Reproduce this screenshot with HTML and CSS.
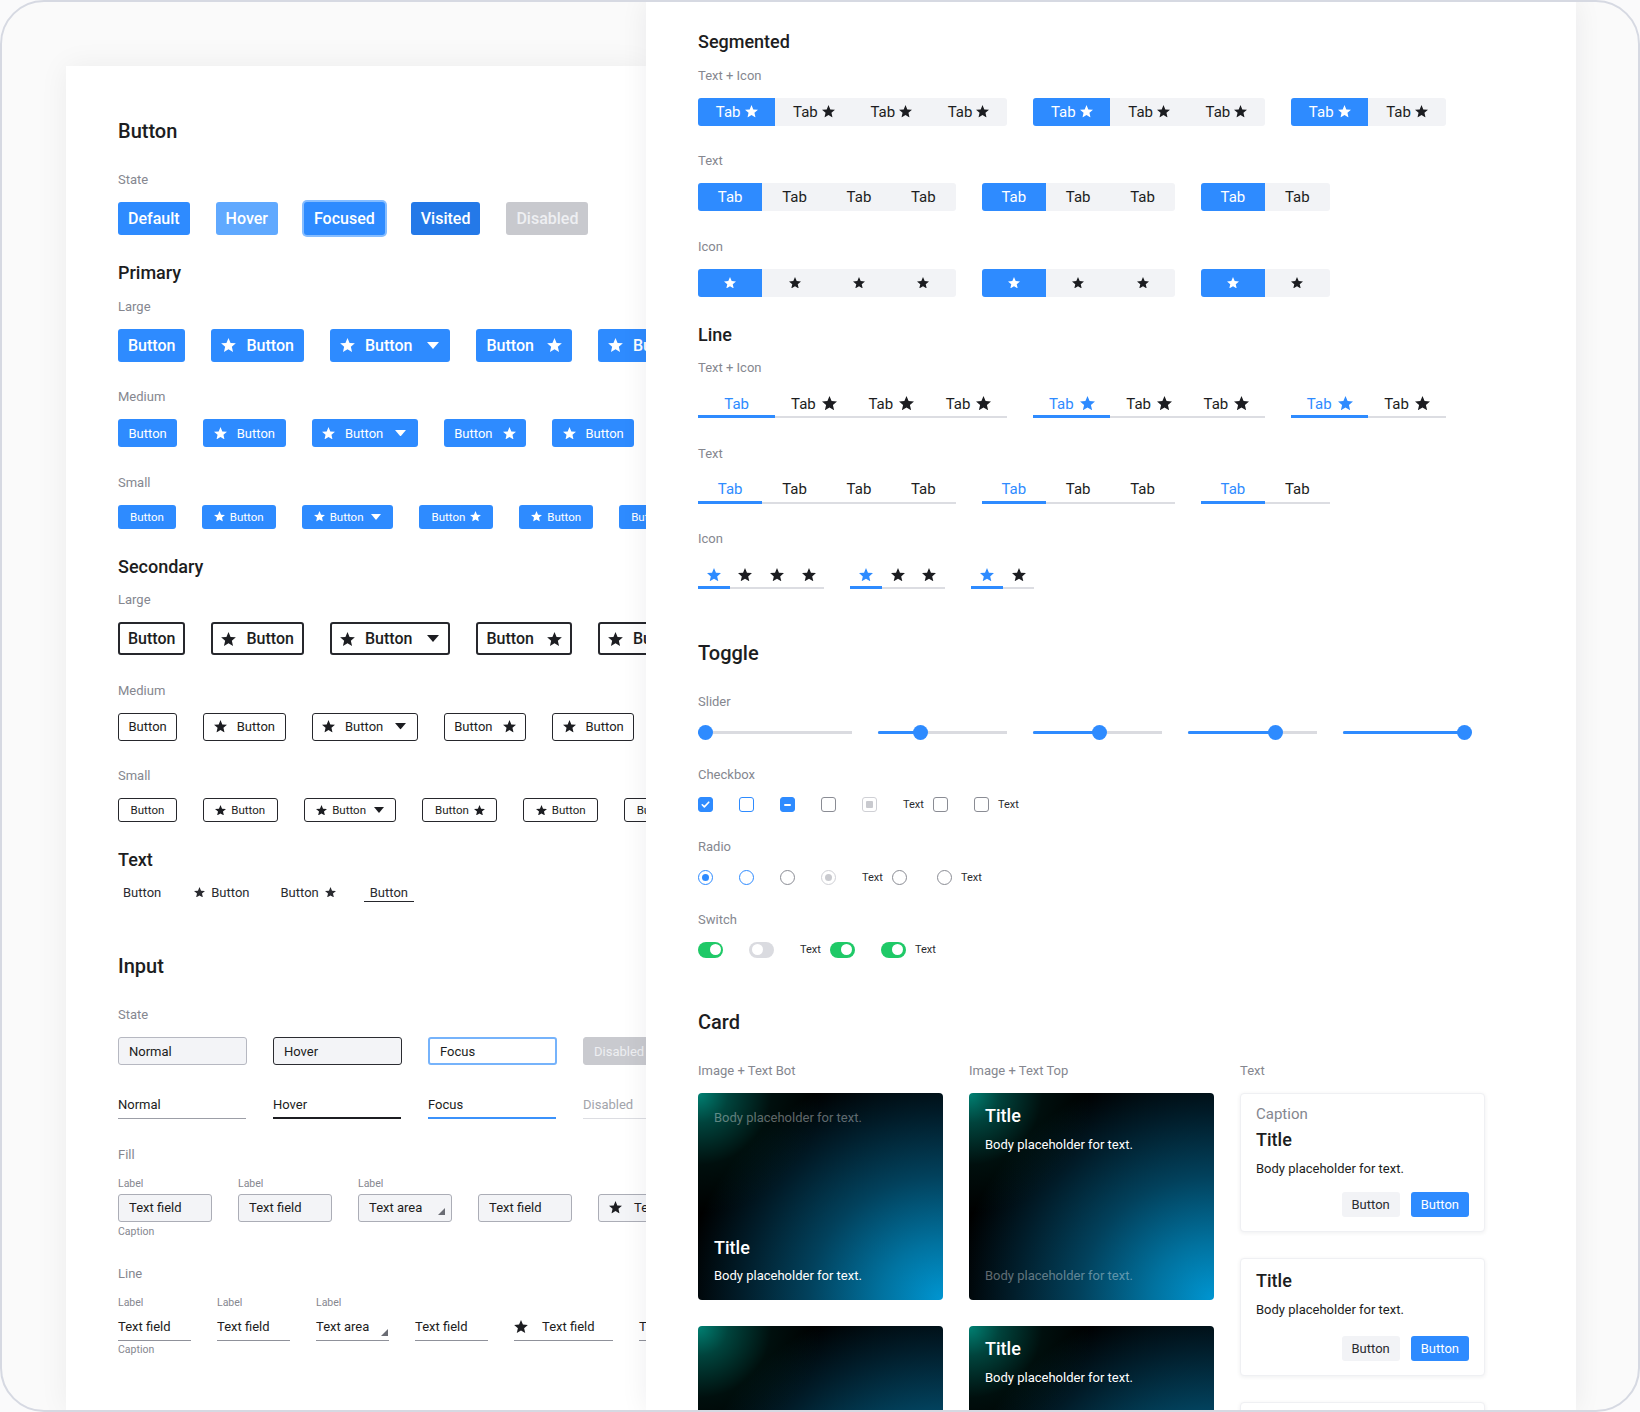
FILE: index.html
```html
<!DOCTYPE html>
<html lang="en">
<head>
<meta charset="utf-8">
<title>UI Kit</title>
<link rel="stylesheet" href="styles.css">
</head>
<body>
<svg class="sprite" aria-hidden="true">
  <symbol id="star" viewBox="2 2 20 19"><path d="M12 2l2.81 6.63L22 9.24l-5.46 4.73L18.18 21 12 17.27 5.82 21l1.64-7.03L2 9.24l7.19-.61z"/></symbol>
  <symbol id="caret" viewBox="0 0 12 7"><path d="M0 0h12L6 7z"/></symbol>
  <symbol id="grip" viewBox="0 0 7 7"><path d="M7 0V7H0z"/></symbol>
</svg>
<div class="frame">
  <section class="panel left">
    <h2 class="h2">Button</h2>
    <div class="lbl">State</div>
    <div class="row">
      <span class="btn st">Default</span>
      <span class="btn st hover">Hover</span>
      <span class="btn st focused">Focused</span>
      <span class="btn st visited">Visited</span>
      <span class="btn st disabled">Disabled</span>
    </div>

    <h3 class="h3">Primary</h3>
    <div class="lbl">Large</div>
    <div class="row">
      <span class="btn p lg">Button</span>
      <span class="btn p lg"><svg class="ic"><use href="#star"/></svg>Button</span>
      <span class="btn p lg"><svg class="ic"><use href="#star"/></svg>Button<svg class="cr"><use href="#caret"/></svg></span>
      <span class="btn p lg">Button<svg class="ic tr"><use href="#star"/></svg></span>
      <span class="btn p lg"><svg class="ic"><use href="#star"/></svg>Button</span>
    </div>
    <div class="lbl">Medium</div>
    <div class="row">
      <span class="btn p md">Button</span>
      <span class="btn p md"><svg class="ic"><use href="#star"/></svg>Button</span>
      <span class="btn p md"><svg class="ic"><use href="#star"/></svg>Button<svg class="cr"><use href="#caret"/></svg></span>
      <span class="btn p md">Button<svg class="ic"><use href="#star"/></svg></span>
      <span class="btn p md"><svg class="ic"><use href="#star"/></svg>Button</span>
    </div>
    <div class="lbl">Small</div>
    <div class="row">
      <span class="btn p sm">Button</span>
      <span class="btn p sm"><svg class="ic"><use href="#star"/></svg>Button</span>
      <span class="btn p sm"><svg class="ic"><use href="#star"/></svg>Button<svg class="cr"><use href="#caret"/></svg></span>
      <span class="btn p sm">Button<svg class="ic"><use href="#star"/></svg></span>
      <span class="btn p sm"><svg class="ic"><use href="#star"/></svg>Button</span>
      <span class="btn p sm">Button</span>
    </div>

    <h3 class="h3">Secondary</h3>
    <div class="lbl">Large</div>
    <div class="row">
      <span class="btn s lg">Button</span>
      <span class="btn s lg"><svg class="ic"><use href="#star"/></svg>Button</span>
      <span class="btn s lg"><svg class="ic"><use href="#star"/></svg>Button<svg class="cr"><use href="#caret"/></svg></span>
      <span class="btn s lg">Button<svg class="ic tr"><use href="#star"/></svg></span>
      <span class="btn s lg"><svg class="ic"><use href="#star"/></svg>Button</span>
    </div>
    <div class="lbl">Medium</div>
    <div class="row">
      <span class="btn s md">Button</span>
      <span class="btn s md"><svg class="ic"><use href="#star"/></svg>Button</span>
      <span class="btn s md"><svg class="ic"><use href="#star"/></svg>Button<svg class="cr"><use href="#caret"/></svg></span>
      <span class="btn s md">Button<svg class="ic"><use href="#star"/></svg></span>
      <span class="btn s md"><svg class="ic"><use href="#star"/></svg>Button</span>
    </div>
    <div class="lbl">Small</div>
    <div class="row">
      <span class="btn s sm">Button</span>
      <span class="btn s sm"><svg class="ic"><use href="#star"/></svg>Button</span>
      <span class="btn s sm"><svg class="ic"><use href="#star"/></svg>Button<svg class="cr"><use href="#caret"/></svg></span>
      <span class="btn s sm">Button<svg class="ic"><use href="#star"/></svg></span>
      <span class="btn s sm"><svg class="ic"><use href="#star"/></svg>Button</span>
      <span class="btn s sm">Button</span>
    </div>

    <h3 class="h3">Text</h3>
    <div class="row trow-btn">
      <span class="tbtn">Button</span>
      <span class="tbtn"><svg class="ic"><use href="#star"/></svg>Button</span>
      <span class="tbtn">Button<svg class="ic"><use href="#star"/></svg></span>
      <span class="tbtn ul">Button</span>
    </div>

    <h2 class="h2">Input</h2>
    <div class="lbl">State</div>
    <div class="row">
      <span class="inp">Normal</span>
      <span class="inp hover">Hover</span>
      <span class="inp focus">Focus</span>
      <span class="inp disabled">Disabled</span>
    </div>
    <div class="row">
      <span class="linp">Normal</span>
      <span class="linp hover">Hover</span>
      <span class="linp focus">Focus</span>
      <span class="linp disabled">Disabled</span>
    </div>
    <div class="lbl">Fill</div>
    <div class="row">
      <div class="field">
        <div class="flabel">Label</div>
        <div class="fbox">Text field</div>
        <div class="fcap">Caption</div>
      </div>
      <div class="field">
        <div class="flabel">Label</div>
        <div class="fbox">Text field</div>
      </div>
      <div class="field">
        <div class="flabel">Label</div>
        <div class="fbox">Text area<svg class="grip"><use href="#grip"/></svg></div>
      </div>
      <div class="field">
        <div class="flabel"></div>
        <div class="fbox">Text field</div>
      </div>
      <div class="field">
        <div class="flabel"></div>
        <div class="fbox icon"><svg class="ic"><use href="#star"/></svg>Text field</div>
      </div>
    </div>
    <div class="lbl">Line</div>
    <div class="row">
      <div class="field">
        <div class="flabel">Label</div>
        <div class="lbox">Text field</div>
        <div class="lcap">Caption</div>
      </div>
      <div class="field">
        <div class="flabel">Label</div>
        <div class="lbox">Text field</div>
      </div>
      <div class="field">
        <div class="flabel">Label</div>
        <div class="lbox">Text area<svg class="grip"><use href="#grip"/></svg></div>
      </div>
      <div class="field">
        <div class="flabel"></div>
        <div class="lbox">Text field</div>
      </div>
      <div class="field">
        <div class="flabel"></div>
        <div class="lbox wide"><svg class="ic"><use href="#star"/></svg>Text field</div>
      </div>
      <div class="field">
        <div class="flabel"></div>
        <div class="lbox">Text field</div>
      </div>
    </div>
  </section>

  <section class="panel right">
    <h3 class="h3">Segmented</h3>
    <div class="lbl">Text + Icon</div>
    <div class="row">
      <div class="seg w77">
        <span class="tab on">Tab<svg class="ic"><use href="#star"/></svg></span>
        <span class="tab">Tab<svg class="ic"><use href="#star"/></svg></span>
        <span class="tab">Tab<svg class="ic"><use href="#star"/></svg></span>
        <span class="tab">Tab<svg class="ic"><use href="#star"/></svg></span>
      </div>
      <div class="seg w77">
        <span class="tab on">Tab<svg class="ic"><use href="#star"/></svg></span>
        <span class="tab">Tab<svg class="ic"><use href="#star"/></svg></span>
        <span class="tab">Tab<svg class="ic"><use href="#star"/></svg></span>
      </div>
      <div class="seg w77">
        <span class="tab on">Tab<svg class="ic"><use href="#star"/></svg></span>
        <span class="tab">Tab<svg class="ic"><use href="#star"/></svg></span>
      </div>
    </div>
    <div class="lbl">Text</div>
    <div class="row">
      <div class="seg w64">
        <span class="tab on">Tab</span><span class="tab">Tab</span><span class="tab">Tab</span><span class="tab">Tab</span>
      </div>
      <div class="seg w64">
        <span class="tab on">Tab</span><span class="tab">Tab</span><span class="tab">Tab</span>
      </div>
      <div class="seg w64">
        <span class="tab on">Tab</span><span class="tab">Tab</span>
      </div>
    </div>
    <div class="lbl">Icon</div>
    <div class="row">
      <div class="seg w64 icons">
        <span class="tab on"><svg class="ic"><use href="#star"/></svg></span>
        <span class="tab"><svg class="ic"><use href="#star"/></svg></span>
        <span class="tab"><svg class="ic"><use href="#star"/></svg></span>
        <span class="tab"><svg class="ic"><use href="#star"/></svg></span>
      </div>
      <div class="seg w64 icons">
        <span class="tab on"><svg class="ic"><use href="#star"/></svg></span>
        <span class="tab"><svg class="ic"><use href="#star"/></svg></span>
        <span class="tab"><svg class="ic"><use href="#star"/></svg></span>
      </div>
      <div class="seg w64 icons">
        <span class="tab on"><svg class="ic"><use href="#star"/></svg></span>
        <span class="tab"><svg class="ic"><use href="#star"/></svg></span>
      </div>
    </div>

    <h3 class="h3">Line</h3>
    <div class="lbl">Text + Icon</div>
    <div class="row">
      <div class="ltabs w77">
        <span class="ltab on">Tab</span>
        <span class="ltab">Tab<svg class="ic"><use href="#star"/></svg></span>
        <span class="ltab">Tab<svg class="ic"><use href="#star"/></svg></span>
        <span class="ltab">Tab<svg class="ic"><use href="#star"/></svg></span>
      </div>
      <div class="ltabs w77">
        <span class="ltab on">Tab<svg class="ic"><use href="#star"/></svg></span>
        <span class="ltab">Tab<svg class="ic"><use href="#star"/></svg></span>
        <span class="ltab">Tab<svg class="ic"><use href="#star"/></svg></span>
      </div>
      <div class="ltabs w77">
        <span class="ltab on">Tab<svg class="ic"><use href="#star"/></svg></span>
        <span class="ltab">Tab<svg class="ic"><use href="#star"/></svg></span>
      </div>
    </div>
    <div class="lbl">Text</div>
    <div class="row">
      <div class="ltabs w64">
        <span class="ltab on">Tab</span><span class="ltab">Tab</span><span class="ltab">Tab</span><span class="ltab">Tab</span>
      </div>
      <div class="ltabs w64">
        <span class="ltab on">Tab</span><span class="ltab">Tab</span><span class="ltab">Tab</span>
      </div>
      <div class="ltabs w64">
        <span class="ltab on">Tab</span><span class="ltab">Tab</span>
      </div>
    </div>
    <div class="lbl">Icon</div>
    <div class="row">
      <div class="ltabs w32 icons">
        <span class="ltab on"><svg class="ic"><use href="#star"/></svg></span>
        <span class="ltab"><svg class="ic"><use href="#star"/></svg></span>
        <span class="ltab"><svg class="ic"><use href="#star"/></svg></span>
        <span class="ltab"><svg class="ic"><use href="#star"/></svg></span>
      </div>
      <div class="ltabs w32 icons">
        <span class="ltab on"><svg class="ic"><use href="#star"/></svg></span>
        <span class="ltab"><svg class="ic"><use href="#star"/></svg></span>
        <span class="ltab"><svg class="ic"><use href="#star"/></svg></span>
      </div>
      <div class="ltabs w32 icons">
        <span class="ltab on"><svg class="ic"><use href="#star"/></svg></span>
        <span class="ltab"><svg class="ic"><use href="#star"/></svg></span>
      </div>
    </div>

    <h2 class="h2">Toggle</h2>
    <div class="lbl">Slider</div>
    <div class="row trow">
      <div class="slider long" style="--p:0"><span class="knob"></span></div>
      <div class="slider" style="--p:0.305"><span class="knob"></span></div>
      <div class="slider" style="--p:0.518"><span class="knob"></span></div>
      <div class="slider" style="--p:0.704"><span class="knob"></span></div>
      <div class="slider" style="--p:1"><span class="knob"></span></div>
    </div>
    <div class="lbl">Checkbox</div>
    <div class="row trow">
      <span class="cb checked"><svg viewBox="0 0 16 16"><path d="M4 8.3l2.6 2.6L12 5.2"/></svg></span>
      <span class="cb active"></span>
      <span class="cb mixed"><i></i></span>
      <span class="cb"></span>
      <span class="cb dis"><i></i></span>
      <span class="pair">Text<span class="cb"></span></span>
      <span class="pair"><span class="cb"></span>Text</span>
    </div>
    <div class="lbl">Radio</div>
    <div class="row trow">
      <span class="rd sel"><i></i></span>
      <span class="rd active"></span>
      <span class="rd"></span>
      <span class="rd dis"><i></i></span>
      <span class="pair">Text<span class="rd"></span></span>
      <span class="pair last"><span class="rd"></span>Text</span>
    </div>
    <div class="lbl">Switch</div>
    <div class="row trow">
      <span class="sw on"><i></i></span>
      <span class="sw"><i></i></span>
      <span class="pair">Text<span class="sw on"><i></i></span></span>
      <span class="pair"><span class="sw on"><i></i></span>Text</span>
    </div>

    <h2 class="h2">Card</h2>
    <div class="cards">
      <div class="ccol">
        <div class="lbl">Image + Text Bot</div>
        <div class="stack">
          <div class="icard bot">
            <p class="muted">Body placeholder for text.</p>
            <div>
              <div class="ctitle">Title</div>
              <p class="cbody">Body placeholder for text.</p>
            </div>
          </div>
          <div class="icard"></div>
        </div>
      </div>
      <div class="ccol">
        <div class="lbl">Image + Text Top</div>
        <div class="stack">
          <div class="icard">
            <div>
              <div class="ctitle">Title</div>
              <p class="cbody">Body placeholder for text.</p>
            </div>
            <p class="muted">Body placeholder for text.</p>
          </div>
          <div class="icard">
            <div>
              <div class="ctitle">Title</div>
              <p class="cbody">Body placeholder for text.</p>
            </div>
          </div>
        </div>
      </div>
      <div class="ccol">
        <div class="lbl">Text</div>
        <div class="stack">
          <div class="tcard">
            <div class="ccap">Caption</div>
            <div class="ctitle">Title</div>
            <p class="cbody">Body placeholder for text.</p>
            <div class="cact"><span class="cbtn">Button</span><span class="cbtn blue">Button</span></div>
          </div>
          <div class="tcard plain">
            <div class="ctitle">Title</div>
            <p class="cbody">Body placeholder for text.</p>
            <div class="cact"><span class="cbtn">Button</span><span class="cbtn blue">Button</span></div>
          </div>
          <div class="tcard plain">
            <div class="ctitle">Title</div>
            <p class="cbody">Body placeholder for text.</p>
          </div>
        </div>
      </div>
    </div>
  </section>
</div>
</body>
</html>
```
FILE: styles.css
```css
html, body {
  margin: 0;
  padding: 0;
  background: #fafafb;
}
body {
  font-family: Roboto, "Liberation Sans", Arial, sans-serif;
  color: #1c1d21;
  width: 1640px;
  height: 1412px;
  overflow: hidden;
}
.sprite {
  display: block;
  width: 0;
  height: 0;
  overflow: hidden;
}
.frame {
  box-sizing: border-box;
  width: 1640px;
  height: 1412px;
  border: 2px solid #d6d9e2;
  border-radius: 44px;
  overflow: hidden;
  background: #fafafa;
  display: flex;
  align-items: stretch;
}
.panel {
  background: #fff;
  box-sizing: border-box;
  flex-shrink: 0;
  overflow: hidden;
}
.left {
  width: 580px;
  margin: 64px 0 0 64px;
  padding: 53px 0 0 52px;
  box-shadow: 0 0 28px rgba(20, 24, 40, 0.06);
}
.right {
  width: 930px;
  padding: 29px 0 0 52px;
  box-shadow: 0 0 26px rgba(20, 24, 40, 0.07);
  position: relative;
  z-index: 1;
}

.h2 {
  font-size: 20px;
  line-height: 24px;
  font-weight: 500;
  margin: 0;
}
.h3 {
  font-size: 18px;
  line-height: 22px;
  font-weight: 500;
  margin: 0;
}
.lbl {
  font-size: 13px;
  line-height: 16px;
  color: #85878f;
  margin: 0 0 14px;
  white-space: nowrap;
}
.h2 + .lbl { margin-top: 29px; }
.h3 + .lbl { margin-top: 14.5px; }
.row + .lbl { margin-top: 27.5px; }
.row + .h3 { margin-top: 27px; }
.row + .h2 { margin-top: 52px; }
.h3 + .row { margin-top: 11px; }
.row + .row { margin-top: 26px; }
.trow + .lbl { margin-top: 26.5px; }

.row {
  display: flex;
  align-items: flex-start;
  gap: 26px;
  white-space: nowrap;
}

/* Buttons */
.btn {
  display: inline-flex;
  align-items: center;
  justify-content: center;
  box-sizing: border-box;
  border-radius: 3px;
  flex-shrink: 0;
  white-space: nowrap;
}
.ic {
  fill: currentColor;
  flex-shrink: 0;
}
.cr {
  fill: currentColor;
  flex-shrink: 0;
}
.st {
  height: 33px;
  padding: 0 10px;
  font-size: 16px;
  font-weight: 500;
  background: #2e8bff;
  color: #fff;
}
.st.hover { background: #60a9ff; }
.st.focused { box-shadow: 0 0 0 2px #86bdff; }
.st.visited { background: #2479e8; }
.st.disabled { background: #c8c9ce; color: #eeeff2; }

.lg {
  height: 33px;
  padding: 0 10px;
  gap: 10px;
  font-size: 16px;
  font-weight: 500;
}
.lg .ic { width: 15px; height: 14px; }
.lg .ic.tr { margin-left: 3px; }
.lg .cr { width: 12px; height: 7px; margin-left: 5px; margin-right: 1px; }
.md {
  height: 28px;
  padding: 0 10.5px;
  gap: 10px;
  font-size: 13px;
}
.md .ic { width: 13px; height: 12.5px; }
.md .cr { width: 11px; height: 6.5px; margin-left: 2px; margin-right: 1px; }
.sm {
  height: 24px;
  padding: 0 12px;
  gap: 5px;
  font-size: 11.5px;
}
.sm .ic { width: 11px; height: 10.5px; }
.sm .cr { width: 10px; height: 6px; margin-left: 3px; }
.p { background: #2e8bff; color: #fff; }
.s { background: #fff; color: #1c1d21; border: 1.5px solid #26272c; }
.s.lg { border-width: 2px; padding: 0 8px; }
.s.md { padding: 0 9.5px; }
.s.sm { padding: 0 11.5px; }

.tbtn {
  display: inline-flex;
  align-items: center;
  gap: 6px;
  height: 20px;
  box-sizing: border-box;
  padding: 0 5px;
  font-size: 13px;
  color: #2a2b30;
}
.tbtn .ic { width: 11px; height: 10.5px; }
.tbtn.ul { border-bottom: 1.5px solid #26272c; padding: 1px 6px 0; }
.trow-btn { gap: 23px; }
.trow-btn .tbtn:nth-child(3) { margin-left: -2px; }

/* Inputs */
.inp {
  box-sizing: border-box;
  width: 129px;
  height: 28px;
  display: flex;
  align-items: center;
  padding: 0 10px;
  font-size: 13px;
  background: #f3f4f7;
  border: 1px solid #b6b8c1;
  border-radius: 3px;
  flex-shrink: 0;
}
.inp.hover { border: 1.5px solid #2b2c31; }
.inp.focus { border: 2px solid #76b3fb; background: #fff; }
.inp.disabled { background: #c9cacf; border-color: #c9cacf; color: #eeeff2; }
.linp {
  box-sizing: border-box;
  width: 128px;
  height: 28px;
  display: flex;
  align-items: center;
  font-size: 13px;
  border-bottom: 1.5px solid #9c9ea7;
  flex-shrink: 0;
  margin-right: 1px;
}
.linp.hover { border-bottom: 2px solid #1c1d21; }
.linp.focus { border-bottom: 2px solid #3b92fb; }
.linp.disabled { border-bottom-color: #dcdde2; color: #a2a4ab; }

.field {
  display: flex;
  flex-direction: column;
  flex-shrink: 0;
}
.flabel {
  height: 14px;
  line-height: 14px;
  font-size: 10.5px;
  color: #85878f;
  margin-bottom: 3px;
}
.fbox {
  box-sizing: border-box;
  width: 94px;
  height: 28px;
  display: flex;
  align-items: center;
  gap: 12px;
  padding: 0 10px;
  font-size: 13px;
  background: #f3f4f7;
  border: 1px solid #abadb6;
  border-radius: 3px;
}
.fbox .ic { width: 13px; height: 12.5px; color: #1c1d21; }
.fcap, .lcap {
  font-size: 10.5px;
  line-height: 14px;
  color: #85878f;
  margin-top: 3px;
}
.lcap { margin-top: 2px; }
.grip {
  width: 7px;
  height: 7px;
  fill: #6a6c74;
  margin-left: auto;
  align-self: flex-end;
  margin-bottom: 6px;
  flex-shrink: 0;
}
.fbox .grip { margin-right: -4px; }
.lbox {
  box-sizing: border-box;
  width: 73px;
  height: 28px;
  display: flex;
  align-items: center;
  font-size: 13px;
  border-bottom: 1.5px solid #8f919a;
}
.lbox.wide { width: 99px; gap: 14px; }
.lbox .ic { width: 14px; height: 13px; }
.lbox .grip { width: 7px; height: 7px; margin-right: 1px; margin-bottom: 4px; }

/* Segmented */
.seg {
  display: flex;
  background: #f2f3f6;
  border-radius: 3px;
  overflow: hidden;
  flex-shrink: 0;
}
.tab {
  height: 28px;
  display: flex;
  align-items: center;
  justify-content: center;
  gap: 4px;
  font-size: 15px;
  color: #1c1d21;
  flex-shrink: 0;
}
.seg .ic { width: 13px; height: 12.5px; }
.seg.icons .ic { width: 12px; height: 11.5px; }
.w77 .tab, .w77 .ltab { width: 77.3px; }
.w64 .tab, .w64 .ltab { width: 64.4px; }
.w32 .ltab { width: 31.6px; }
.tab.on { background: #2e8bff; color: #fff; }

.ltabs {
  display: flex;
  flex-shrink: 0;
}
.ltab {
  box-sizing: border-box;
  height: 28px;
  display: flex;
  align-items: center;
  justify-content: center;
  gap: 6px;
  padding-top: 1px;
  font-size: 15px;
  color: #1c1d21;
  border-bottom: 2px solid #dcdde2;
  flex-shrink: 0;
}
.ltab .ic { width: 15px; height: 14.3px; }
.ltabs.icons .ic { width: 14px; height: 13.3px; }
.ltab.on { color: #2e8bff; border-bottom: 3px solid #2e8bff; padding-top: 2px; }

/* Toggle */
.trow { align-items: center; height: 16px; }
.slider {
  position: relative;
  width: 129px;
  height: 16px;
  flex-shrink: 0;
  background: linear-gradient(#dadbe0, #dadbe0) no-repeat 0 50% / 100% 3px;
  border-radius: 2px;
}
.slider.long { width: 154px; }
.slider::before {
  content: "";
  display: block;
  height: 3px;
  margin-top: 6.5px;
  width: calc((100% - 15px) * var(--p) + 7.5px);
  background: #2e8bff;
  border-radius: 2px;
}
.knob {
  position: absolute;
  top: 0.5px;
  left: calc((100% - 15px) * var(--p));
  width: 15px;
  height: 15px;
  border-radius: 50%;
  background: #2e8bff;
}
.cb {
  box-sizing: border-box;
  width: 15px;
  height: 15px;
  border: 1.5px solid #8a8c94;
  border-radius: 3px;
  display: inline-flex;
  align-items: center;
  justify-content: center;
  flex-shrink: 0;
  background: #fff;
}
.cb.checked { background: #2e8bff; border-color: #2e8bff; }
.cb.checked svg { width: 13px; height: 13px; }
.cb.checked path { fill: none; stroke: #fff; stroke-width: 2; stroke-linecap: round; stroke-linejoin: round; }
.cb.active { border-color: #2e8bff; }
.cb.mixed { background: #2e8bff; border-color: #2e8bff; }
.cb.mixed i { width: 7px; height: 2px; background: #fff; border-radius: 1px; }
.cb.dis { border-color: #cfd0d5; }
.cb.dis i { width: 7px; height: 7px; background: #c9cacf; border-radius: 1px; }
.pair {
  display: inline-flex;
  align-items: center;
  gap: 9px;
  font-size: 11px;
  color: #2a2b30;
  flex-shrink: 0;
}
.pair.last { margin-left: 4px; }
.rd {
  box-sizing: border-box;
  width: 15px;
  height: 15px;
  border: 1.5px solid #8a8c94;
  border-radius: 50%;
  display: inline-flex;
  align-items: center;
  justify-content: center;
  flex-shrink: 0;
}
.rd.sel, .rd.active { border-color: #2e8bff; }
.rd.sel i { width: 7px; height: 7px; border-radius: 50%; background: #2e8bff; }
.rd.dis { border-color: #cfd0d5; }
.rd.dis i { width: 7px; height: 7px; border-radius: 50%; background: #c9cacf; }
.sw {
  box-sizing: border-box;
  width: 25px;
  height: 16px;
  border-radius: 8px;
  background: #dadbe0;
  display: inline-flex;
  align-items: center;
  padding: 0 2.5px;
  flex-shrink: 0;
}
.sw i {
  width: 11px;
  height: 11px;
  border-radius: 50%;
  background: #fff;
}
.sw.on { background: #1fc967; justify-content: flex-end; }

/* Cards */
.cards {
  display: flex;
  gap: 26px;
  margin-top: 29px;
}
.ccol {
  width: 245px;
  flex-shrink: 0;
}
.stack {
  display: flex;
  flex-direction: column;
  gap: 26px;
}
.icard {
  box-sizing: border-box;
  height: 207px;
  border-radius: 4px;
  padding: 12px 16px 16px;
  display: flex;
  flex-direction: column;
  justify-content: space-between;
  color: #fff;
  background:
    radial-gradient(ellipse 50% 58% at 0% 0%, rgba(0, 130, 116, 1) 0%, rgba(0, 96, 86, 0.7) 25%, rgba(0, 50, 45, 0.3) 60%, rgba(0, 0, 0, 0) 100%),
    radial-gradient(ellipse 115% 125% at 100% 100%, #0096d2 0%, #01729f 22%, #02415c 48%, #011c29 72%, rgba(0, 0, 0, 0) 92%),
    #000;
}
.icard.bot .muted { margin-top: 5px; }
.muted {
  margin: 0;
  font-size: 13px;
  line-height: 16px;
  color: rgba(255, 255, 255, 0.38);
}
.ctitle {
  font-size: 18px;
  line-height: 22px;
  font-weight: 500;
}
.cbody {
  margin: 10px 0 0;
  font-size: 13px;
  line-height: 16px;
}
.icard.bot .cbody { margin-top: 9px; }
.tcard {
  box-sizing: border-box;
  background: #fff;
  border: 1px solid #eff0f3;
  border-radius: 4px;
  box-shadow: 0 1px 4px rgba(20, 24, 40, 0.07);
  padding: 11px 15px 14px;
}
.ccap {
  font-size: 15px;
  line-height: 18px;
  color: #85878f;
  margin-bottom: 6px;
}
.cact {
  display: flex;
  justify-content: flex-end;
  gap: 11px;
  margin-top: 15px;
}
.tcard.plain .cact { margin-top: 18px; }
.cbtn {
  height: 25px;
  display: inline-flex;
  align-items: center;
  padding: 0 10px;
  font-size: 13px;
  border-radius: 3px;
  background: #f2f3f6;
  color: #2a2b30;
}
.cbtn.blue { background: #2e8bff; color: #fff; }
```
